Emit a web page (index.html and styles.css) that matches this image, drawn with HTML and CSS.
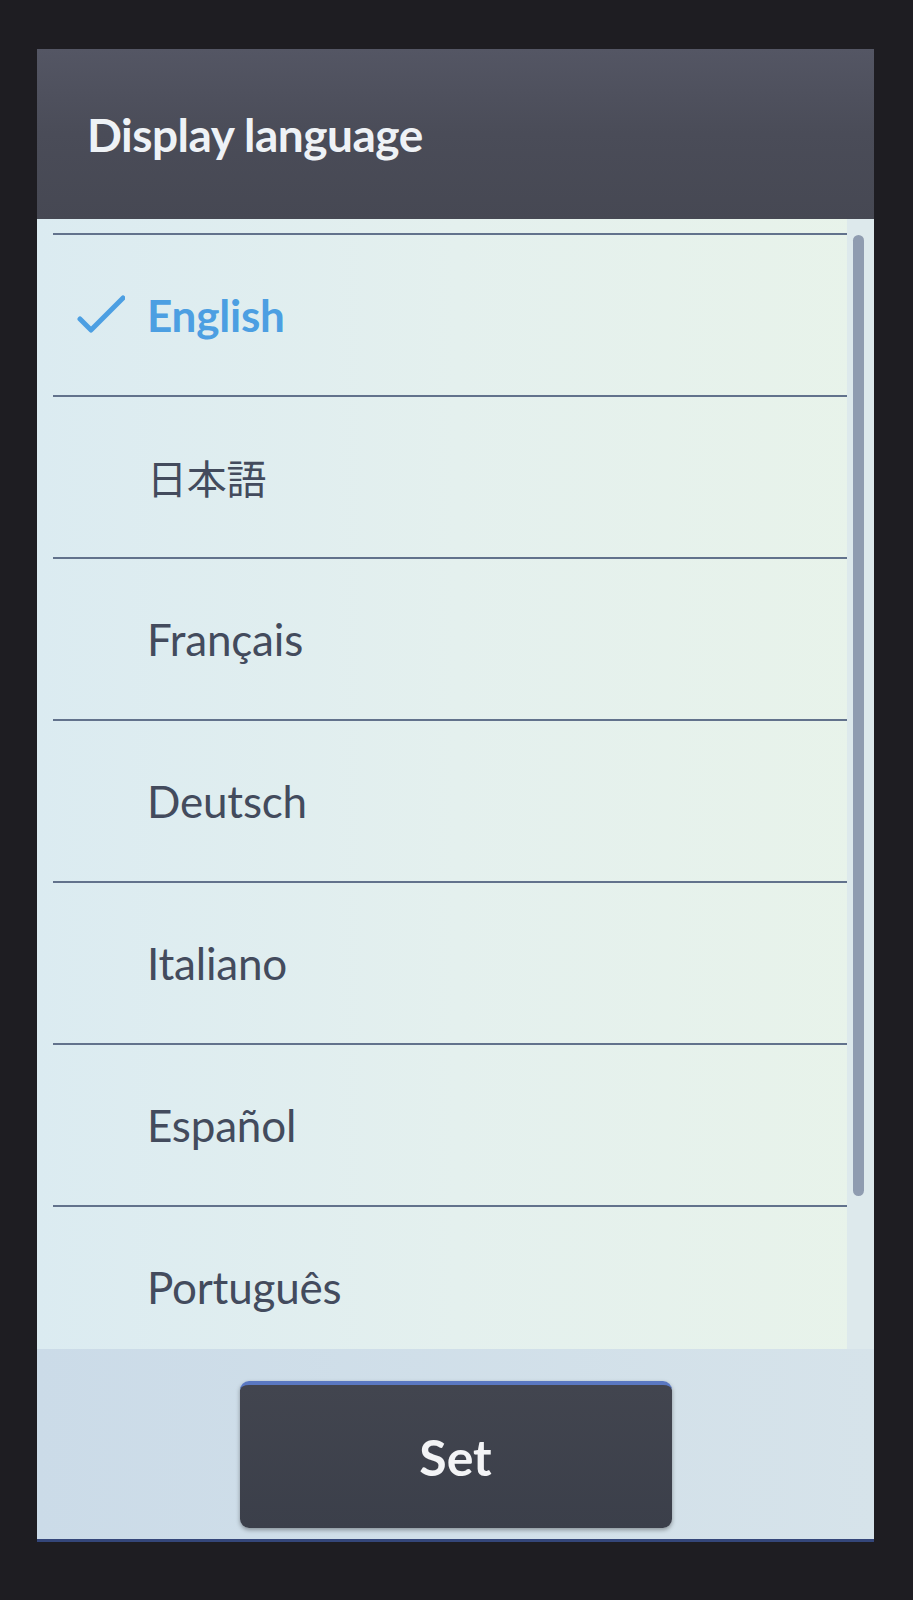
FILE: index.html
```html
<!DOCTYPE html>
<html lang="en">
<head>
    <meta charset="UTF-8">
    <meta name="viewport" content="width=device-width, initial-scale=1.0">
    <title>Display language</title>
    <link rel="stylesheet" href="styles.css">
</head>
<body>
    <div class="screen">
        <div class="header">
            <h1>Display language</h1>
        </div>

        <div class="list-area">
            <ul class="lang-list">
                <li class="lang selected">
                    <span class="mark">
                        <svg width="48" height="40" viewBox="0 0 48 40">
                            <path d="M3 24 L14 35 L46 3" fill="none" stroke="#4c9fe2" stroke-width="5" stroke-linecap="round" stroke-linejoin="round"/>
                        </svg>
                    </span>
                    <span class="name">English</span>
                </li>
                <li class="lang"><span class="mark"></span><span class="name cjk">日本語</span></li>
                <li class="lang"><span class="mark"></span><span class="name">Français</span></li>
                <li class="lang"><span class="mark"></span><span class="name">Deutsch</span></li>
                <li class="lang"><span class="mark"></span><span class="name">Italiano</span></li>
                <li class="lang"><span class="mark"></span><span class="name">Español</span></li>
                <li class="lang"><span class="mark"></span><span class="name">Português</span></li>
            </ul>
            <div class="gutter">
                <div class="scroll-thumb"></div>
            </div>
        </div>

        <div class="footer">
            <button class="set-btn">Set</button>
        </div>
    </div>
</body>
</html>
```

FILE: styles.css
```css
body {
    margin: 0;
    height: 1600px;
    background: #1e1d22;
    font-family: Lato, "Open Sans", sans-serif;
    overflow: hidden;
}

.screen {
    margin: 49px 39px 0 37px;
    height: 1493px;
    display: flex;
    flex-direction: column;
    background: #d4e2ea;
    border-bottom: 3px solid #34467a;
    box-sizing: border-box;
}

/* title bar */
.header {
    height: 170px;
    flex-shrink: 0;
    display: flex;
    align-items: center;
    padding-left: 50px;
    background: linear-gradient(#545664, #4a4c58 50%, #464853);
}
.header h1 {
    margin: 0;
    color: #eef2f6;
    font-size: 46px;
    font-weight: 700;
    letter-spacing: -0.5px;
}

/* language list */
.list-area {
    height: 1130px;
    flex-shrink: 0;
    display: flex;
    background: linear-gradient(90deg, #dbebf1, #e4f0ee 50%, #e8f3ea);
}
.lang-list {
    list-style: none;
    margin: 0 0 0 16px;
    padding: 14px 0 0;
    width: 794px;
    overflow: hidden;
}
.lang {
    height: 162px;
    box-sizing: border-box;
    border-top: 2px solid #62728c;
    display: flex;
    align-items: center;
    padding-left: 24px;
}
.mark {
    width: 70px;
    height: 40px;
    flex-shrink: 0;
}
.name {
    font-size: 44px;
    color: #434b5d;
    letter-spacing: -0.2px;
}
.cjk {
    font-family: "Noto Sans CJK JP", sans-serif;
    font-size: 40px;
}
.selected .name {
    color: #4c9fe2;
    font-weight: 700;
}

.gutter {
    flex: 1;
    padding: 16px 0 0 6px;
    background: #dde9ec;
}
.scroll-thumb {
    width: 11px;
    height: 961px;
    border-radius: 6px;
    background: #8f9cb0;
}

/* bottom action */
.footer {
    flex: 1;
    display: flex;
    justify-content: center;
    padding-top: 32px;
    background: linear-gradient(90deg, #cbdbe8, #d6e3ea);
}
.set-btn {
    width: 432px;
    height: 147px;
    border: none;
    border-top: 4px solid #5a78c2;
    border-radius: 9px;
    background: linear-gradient(#42454f, #3b3f4a);
    color: #f3f4f6;
    font-family: Lato, sans-serif;
    font-size: 50px;
    font-weight: 700;
    box-shadow: 0 2px 4px rgba(0, 0, 0, 0.35);
}
```
